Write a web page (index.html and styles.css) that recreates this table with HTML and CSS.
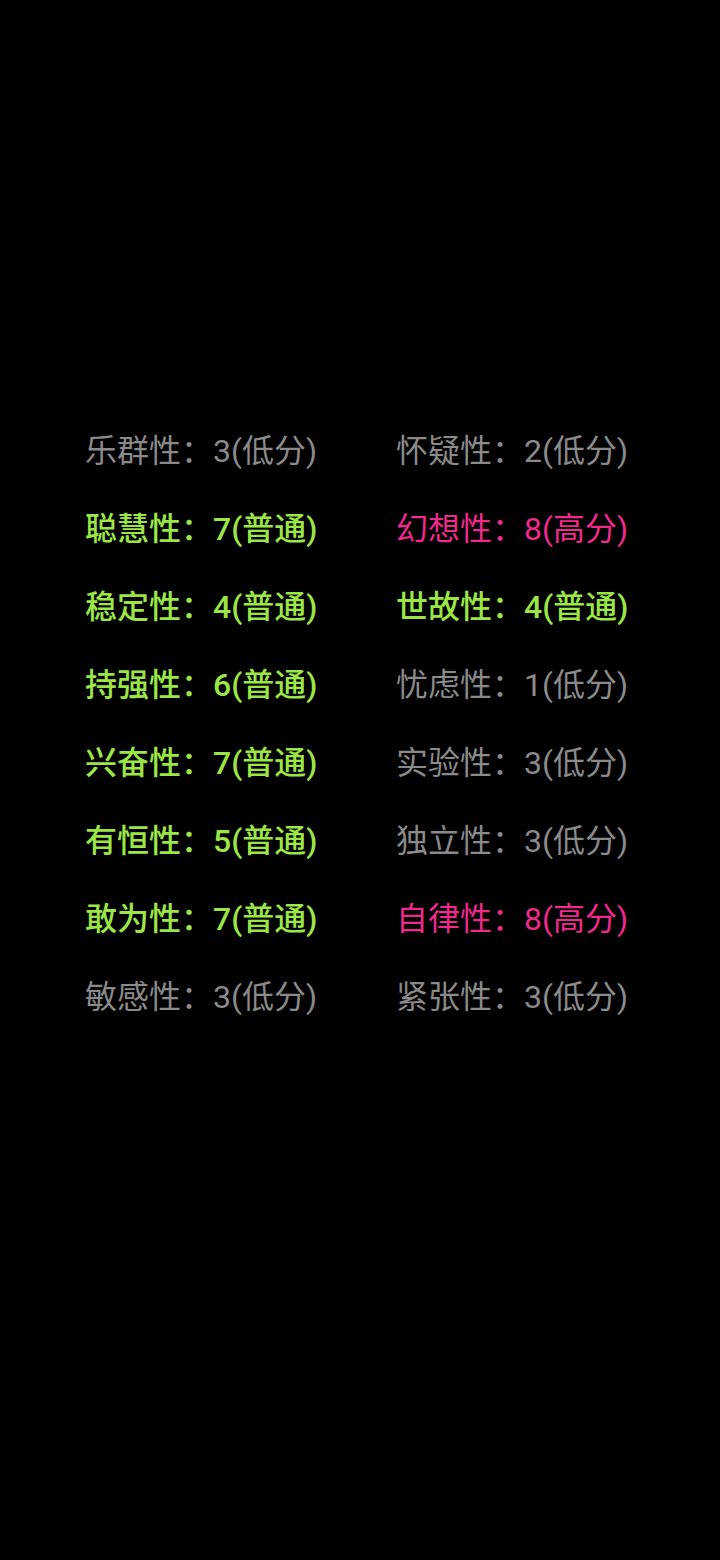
FILE: index.html
```html
<!DOCTYPE html>
<html lang="zh-CN">
<head>
<meta charset="utf-8">
<title>16PF</title>
<link rel="stylesheet" href="styles.css">
</head>
<body>
<div class="grid">
  <div class="item low">乐群性：3(低分)</div>
  <div class="item low">怀疑性：2(低分)</div>
  <div class="item mid">聪慧性：7(普通)</div>
  <div class="item high">幻想性：8(高分)</div>
  <div class="item mid">稳定性：4(普通)</div>
  <div class="item mid">世故性：4(普通)</div>
  <div class="item mid">持强性：6(普通)</div>
  <div class="item low">忧虑性：1(低分)</div>
  <div class="item mid">兴奋性：7(普通)</div>
  <div class="item low">实验性：3(低分)</div>
  <div class="item mid">有恒性：5(普通)</div>
  <div class="item low">独立性：3(低分)</div>
  <div class="item mid">敢为性：7(普通)</div>
  <div class="item high">自律性：8(高分)</div>
  <div class="item low">敏感性：3(低分)</div>
  <div class="item low">紧张性：3(低分)</div>
</div>
</body>
</html>
```
FILE: styles.css
```css
html, body {
  margin: 0;
  padding: 0;
  background: #000;
  height: 100%;
}
body {
  width: 720px;
  min-height: 1560px;
  font-family: Roboto, "Noto Sans CJK SC", sans-serif;
}
.grid {
  display: grid;
  grid-template-columns: 311px 311px;
  padding: 412px 0 0 85px;
}
.item {
  font-size: 32px;
  line-height: 78px;
  height: 78px;
  white-space: nowrap;
}
.low {
  color: #8a8a8a;
  font-weight: 400;
}
.mid {
  color: #9be646;
  font-weight: 500;
}
.high {
  color: #ee2a8c;
  font-weight: 400;
}
```
